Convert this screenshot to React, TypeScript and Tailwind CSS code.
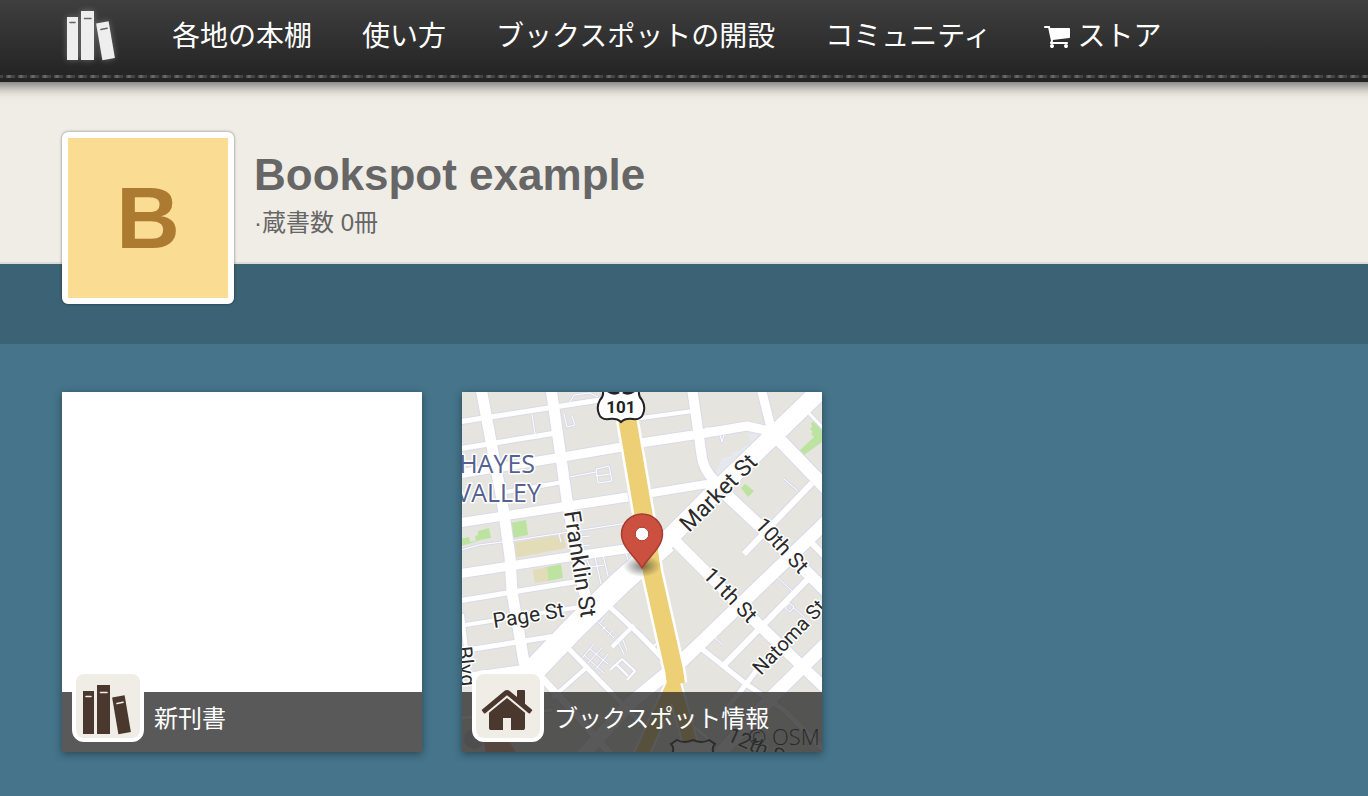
import type { ReactNode } from "react";

const NAV_LINKS = ["各地の本棚", "使い方", "ブックスポットの開設", "コミュニティ"];

type Road = { d: string; w: number };

// widths are the white part only, the casing adds 2 units
const ROADS: Road[] = [
  // hayes valley, north-south
  { d: "M19 -4L40 108L48 165L50 200L62 270L74 284", w: 11 },
  { d: "M89 -4L105 108L120 191L128 222", w: 11 },
  { d: "M0 222L8 292", w: 4 },
  // hayes valley, east-west
  { d: "M-4 30L138 8L160 5", w: 5 },
  { d: "M-4 57L94 41", w: 5 },
  { d: "M-4 82L101 65L160 55", w: 9 },
  { d: "M38 101L101 90", w: 4 },
  { d: "M-4 131L100 115L166 105", w: 9 },
  { d: "M-4 159L17 153L48 149L166 131", w: 1 },
  { d: "M-4 182L100 166L170 156", w: 9 },
  { d: "M-4 209L118 189", w: 5 },
  { d: "M3 233L118 215", w: 4 },
  { d: "M5 258L100 243", w: 5 },
  { d: "M5 284L68 275", w: 6 },
  { d: "M70 22L73 42", w: 1 },
  { d: "M108 10L112 3L128 1L136 5", w: 1 },
  { d: "M102 22L105 35L113 33L110 24", w: 1 },
  { d: "M108 85L134 80M134 77L147 74L150 89L136 91ZM134 84L148 82", w: 1 },
  { d: "M97 142L99 150M118 145L128 144M118 154L128 153", w: 1 },
  { d: "M125 168L129 178M133 165L139 192M141 163L146 184M122 176L142 173M162 155L166 168", w: 1 },
  // east of van ness
  { d: "M172 27L231 19", w: 4 },
  { d: "M172 52L238 42L285 34L311 40", w: 9 },
  { d: "M230 -4L240 66Q242 78 252 88L258 96", w: 10 },
  { d: "M299 -4L310 40", w: 9 },
  { d: "M184 102L251 91", w: 8 },
  { d: "M243 36L253 36M258 43L260 50L262 43", w: 1 },
  { d: "M338 12L363 38", w: 3 },
  // south of market
  { d: "M311 41L366 98", w: 13 },
  { d: "M256 95L301 137L366 201", w: 12 },
  { d: "M213 149L295 231L366 299", w: 11 },
  { d: "M366 128L221 268L170 310L120 364", w: 13 },
  { d: "M350 91L282 162", w: 6 },
  { d: "M322 87L335 98", w: 1 },
  { d: "M345 146L366 168", w: 6 },
  { d: "M345 188L262 273", w: 6 },
  { d: "M312 182L330 199", w: 1 },
  { d: "M323 216L327 211L332 215L328 220ZM332 216L342 225", w: 1 },
  { d: "M366 250L311 304L256 364", w: 13 },
  { d: "M240 257L284 292L322 318L366 362", w: 5 },
  { d: "M252 245L261 253", w: 1 },
  { d: "M298 274L264 318", w: 5 },
  { d: "M148 215L178 243L204 270", w: 5 },
  { d: "M106 256L138 289L178 330", w: 5 },
  { d: "M172 233L150 255M124 276L90 306", w: 4 },
  { d: "M190 256L196 250", w: 2 },
  { d: "M78 284L110 318L150 364", w: 7 },
  { d: "M136 230L152 246M140 238L144 234M146 244L150 239M142 226L138 231", w: 1 },
  { d: "M122 263L142 281M128 257L146 272M132 252L120 266M140 256L126 271M146 262L134 277", w: 1 },
  { d: "M151 254L160 247M156 250L162 262M161 248L165 258", w: 1 },
  { d: "M148 278L160 267L173 279L165 288M154 272L166 284", w: 2 },
  { d: "M14 310L60 350M0 326L90 318", w: 3 },
  { d: "M188 340L212 318L250 350", w: 3 },
  // market street
  { d: "M366 -9L311 44L255 98L198 155", w: 18 },
  { d: "M204 150L158 191L112 236L66 284L20 332", w: 23 },
];

const HIGHWAY = "M164 20L182 125L190 180L212 278L214 292";
const HIGHWAY_SPLIT = "M213 288L196 326L178 366M211 290L228 350L230 366";

const SHIELD =
  "M140 -4Q143 3 138 8Q134 15 137 22Q139 28 147 27Q155 26 159 30Q163 26 171 27Q179 28 181 22Q184 15 180 8Q175 3 178 -4Z";

function Books({ className }: { className: string }) {
  return (
    <svg viewBox="0 0 49 50" className={className} aria-hidden="true">
      <mask id="book-labels">
        <rect width="49" height="50" fill="#fff" />
        <path
          d="M3.500 11.500h5M18 7.500h6.500M34.500 18.500l6-1.200"
          stroke="#000"
          strokeWidth="1.600"
          strokeLinecap="round"
        />
      </mask>
      <g fill="currentColor" mask="url(#book-labels)">
        <path d="M.5 6h11v43H.5zM14.500 0h13v49h-13z" />
        <path d="M29.600 12.500l12.500-2.200 6.300 36.700-12.500 2.200z" />
      </g>
    </svg>
  );
}

function CartIcon() {
  return (
    <svg viewBox="0 0 1664 1536" className="h-6 w-[26px] fill-current" aria-hidden="true">
      <g transform="translate(0 -192)">
        <path d="M640 1536q0 52-38 90t-90 38-90-38-38-90 38-90 90-38 90 38 38 90zm896 0q0 52-38 90t-90 38-90-38-38-90 38-90 90-38 90 38 38 90zm128-1088v512q0 24-16.500 42.500t-40.500 21.500l-1044 122q13 60 13 70 0 16-24 64h920q26 0 45 19t19 45-19 45-45 19h-1024q-26 0-45-19t-19-45q0-11 8-31.500t16-36 21.500-40 15.500-29.500l-177-823h-204q-26 0-45-19t-19-45 19-45 45-19h256q16 0 28.500 6.500t19.500 15.500 13 24.500 8 26 5.500 29.500 4.500 26h1201q26 0 45 19t19 45z" />
      </g>
    </svg>
  );
}

function HomeIcon() {
  return (
    <svg viewBox="0 0 1792 1792" className="size-14 shrink-0 fill-current" aria-hidden="true">
      <path d="M1472 992v480q0 26-19 45t-45 19h-384v-384h-256v384h-384q-26 0-45-19t-19-45v-480q0-1 .5-3t.5-3l575-474 575 474q1 2 1 6zm223-69l-62 74q-8 9-21 11h-3q-13 0-21-7l-692-577-692 577q-12 8-24 7-13-2-21-11l-62-74q-8-10-7-23.500t11-21.500l719-599q32-26 76-26t76 26l244 204v-195q0-14 9-23t23-9h192q14 0 23 9t9 23v408l219 182q10 8 11 21.500t-7 23.500z" />
    </svg>
  );
}

function StreetMap() {
  return (
    <svg viewBox="0 0 360 360" className="size-full" role="img" aria-label="地図">
      <defs>
        <radialGradient id="pin-shadow">
          <stop offset="0" stopColor="#000" stopOpacity=".5" />
          <stop offset="1" stopColor="#000" stopOpacity="0" />
        </radialGradient>
      </defs>
      <rect width="360" height="360" fill="#e5e4df" />

      {/* parks and plots */}
      <g fill="#bde3a0">
        <path d="M48 131l16-3 2 15-16 3z" />
        <path d="M-2 147l9-2 1 5 6-1-1-5 3-1v-4l11-3 2 10-11 2-8 3-12 3z" />
        <path d="M85 175l14-3 2 14-15 3z" />
        <path d="M-2 220l3 0 1 8-4 0z" />
        <path d="M338 58l14-13-3-3 2-2-3-3 2-2-1-4 4-2 7 8v13l-18 13z" />
        <path d="M279 96l4-4 9 7-6 6z" />
        <path d="M28 344l14 0 4 16-14 0z" />
      </g>
      <path d="M49 151l52-9 3 14-52 10zM71 178l14-3 1 14-13 2z" fill="#e3dcb8" />
      <path d="M260 66l10-2v-4l8-1 4-5 6-2-1-12 16 2-45 44-5-2z" fill="#e6e8ef" />
      <path d="M22 350l20-8 12 18H24z" fill="#f0a080" />
      <circle cx="12" cy="347" r="10" fill="#c5c5cf" />

      <g fill="none" strokeLinejoin="round">
        {ROADS.map((road) => (
          <path key={road.d} d={road.d} stroke="#d9daea" strokeWidth={road.w + 2} />
        ))}
        {ROADS.map((road) => (
          <path key={road.d} d={road.d} stroke="#fff" strokeWidth={road.w} />
        ))}
        <path d={HIGHWAY} stroke="#fff" strokeWidth="23" />
        <path d={HIGHWAY_SPLIT} stroke="#fff" strokeWidth="17" />
        <path d={HIGHWAY_SPLIT} stroke="#edd075" strokeWidth="13" />
        <path d={HIGHWAY} stroke="#edd075" strokeWidth="18" />
      </g>

      <g fill="#fff" stroke="#222" strokeWidth="2">
        <path d={SHIELD} />
        <path d="M209 352l6-4q7 4 16 0 9 4 16 0l6 4q-4 4-1 10h-42q3-6-1-10z" />
      </g>
      <path d="M145 -2Q151 3 157 0M161 0Q167 3 173 -2" fill="none" stroke="#222" strokeWidth="3" />
      <text x="159" y="21" textAnchor="middle" fontSize="17" fontWeight="700" fill="#222" className="font-['Roboto',sans-serif]">
        101
      </text>

      <g
        className="font-['Roboto',sans-serif]"
        fill="#2b2b2b"
        stroke="#fff"
        strokeWidth="3"
        strokeLinejoin="round"
        paintOrder="stroke"
        fontSize="21"
      >
        <g fill="#56618f" fontSize="25" className="font-['Open_Sans',sans-serif]">
          <text x="73" y="81" textAnchor="end">HAYES</text>
          <text x="79" y="110" textAnchor="end">VALLEY</text>
        </g>
        <text transform="translate(102 120) rotate(81)" fontSize="23">Franklin St</text>
        <text transform="translate(32 236) rotate(-9)">Page St</text>
        <text transform="translate(227 141) rotate(-45)" fontSize="23">Market St</text>
        <text transform="translate(292 134) rotate(47)">10th St</text>
        <text transform="translate(240 184) rotate(46)">11th St</text>
        <text transform="translate(299 284) rotate(-46)" fontSize="20">Natoma St</text>
        <text transform="translate(-5 255) rotate(84)">Blvd</text>
        <text transform="translate(264 348) rotate(24)">12th St</text>
      </g>
      <text x="286" y="353" fontSize="22" fontWeight="300" fill="#111" className="font-['Open_Sans',sans-serif]">
        © OSM
      </text>

      <ellipse cx="180" cy="174" rx="19" ry="11" fill="url(#pin-shadow)" />
      <path
        d="M180 176C175 166 159.500 156 159.500 142a20.500 20 0 0 1 41 0C200.500 156 185 166 180 176z"
        fill="#cc5040"
        stroke="#a63c32"
        strokeWidth="1.500"
      />
      <circle cx="180" cy="142" r="6.800" fill="#fff" stroke="#a63c32" strokeWidth="1" />
    </svg>
  );
}

function Card({ title, icon, children }: { title: string; icon: ReactNode; children?: ReactNode }) {
  return (
    <a href="#" className="relative block size-[360px] bg-white shadow-[0_2px_8px_rgba(0,0,0,0.4)]">
      {children}
      <span className="absolute inset-x-0 bottom-0 flex h-[60px] items-center bg-[#303030]/80 pr-2 pl-[92px] text-2xl text-white">
        <span className="absolute bottom-[10px] left-[10px] flex size-[72px] items-center justify-center rounded-xl border-4 border-white bg-[#f0ede6] pt-2 pr-0.5 text-[#4a382e]">
          {icon}
        </span>
        <span className="-mt-1.5">{title}</span>
      </span>
    </a>
  );
}

export default function App() {
  return (
    <div className="min-h-screen overflow-x-clip bg-[#45748b] font-['Liberation_Sans','Noto_Sans_CJK_JP',sans-serif]">
      <header className="relative bg-linear-to-b from-[#3f3f3f] to-[#222] pb-1 shadow-[0_-8px_12px_12px_rgba(0,0,0,0.55)]">
        <nav className="flex h-[72px] items-center gap-[50px] px-[62px] text-[28px] leading-[44px] whitespace-nowrap text-white">
          <a href="#" aria-label="ホーム" className="mr-1.5 ml-1">
            <Books className="h-[50px] w-[50px] text-[#eee] drop-shadow-[0_0_3px_rgba(255,255,255,0.3)]" />
          </a>
          {NAV_LINKS.map((label) => (
            <a key={label} href="#" className="pt-0.5">
              {label}
            </a>
          ))}
          <a href="#" className="flex items-center gap-2 pt-0.5 pl-0.5">
            <CartIcon />
            ストア
          </a>
        </nav>
        <div className="mt-[3px] h-[3px] bg-[linear-gradient(90deg,#444_3px,#2a2a2a_3px,#2a2a2a_6px,#444_6px,#707070_9px,#444_12px)] bg-size-[12px_3px]" />
      </header>

      <section className="flex h-[182px] items-start gap-5 border-b-2 border-[#dcdcd8] bg-[#f0ede6] px-[62px] pt-[50px]">
        <div className="relative flex size-[172px] shrink-0 items-center justify-center rounded-md border-6 border-white bg-[#fadc92] text-[88px] font-bold text-[#ad7a32] shadow-[0_0_3px_rgba(0,0,0,0.5)]">
          B
        </div>
        <div className="pt-[18px] text-[#666]">
          <h1 className="text-[44px] leading-[50px] font-bold">Bookspot example</h1>
          <p className="text-2xl leading-[46px]">·蔵書数 0冊</p>
        </div>
      </section>
      <div className="h-20 bg-[#3c6375]" />

      <main className="flex flex-wrap gap-10 px-[62px] pt-12 pb-11">
        <Card title="新刊書" icon={<Books className="h-[50px] w-[50px]" />} />
        <Card title="ブックスポット情報" icon={<HomeIcon />}>
          <StreetMap />
        </Card>
      </main>
    </div>
  );
}
